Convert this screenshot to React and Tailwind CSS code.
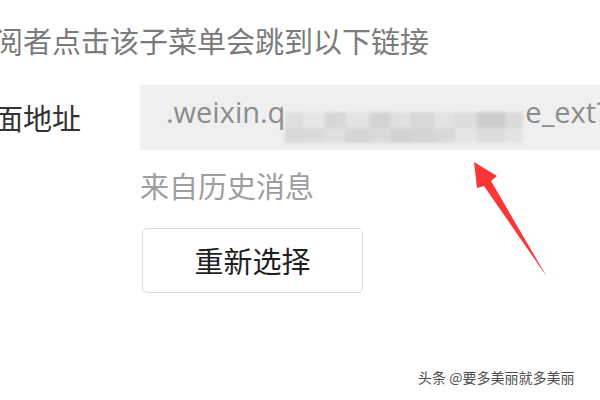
import React from "react";

const blocks = [
  { w: 18, top: "#dedede", bot: "#d8d8d8" },
  { w: 22, top: "#e6e6e6", bot: "#dadada" },
  { w: 20, top: "#d6d6d6", bot: "#e0e0e0" },
  { w: 24, top: "#e3e3e3", bot: "#d5d5d5" },
  { w: 22, top: "#d3d3d3", bot: "#dadada" },
  { w: 20, top: "#e0e0e0", bot: "#d2d2d2" },
  { w: 24, top: "#d8d8d8", bot: "#d4d4d4" },
  { w: 20, top: "#e2e2e2", bot: "#d8d8d8" },
  { w: 22, top: "#dcdcdc", bot: "#e4e4e4" },
  { w: 28, top: "#cdcdcd", bot: "#dddddd" },
  { w: 18, top: "#dadada", bot: "#e3e3e3" },
];

function Mosaic() {
  return (
    <span className="inline-flex h-[31px] w-[240px] translate-y-[5px] overflow-hidden align-baseline blur-[1.5px]">
      {blocks.map((b, i) => (
        <span key={i} className="flex flex-col" style={{ width: b.w }}>
          <span className="h-[16px]" style={{ background: b.top }} />
          <span className="h-[15px]" style={{ background: b.bot }} />
        </span>
      ))}
    </span>
  );
}

export default function App() {
  return (
    <div className="relative h-[400px] w-[600px] overflow-hidden bg-white font-['Noto_Sans_CJK_SC','Noto_Sans',sans-serif]">
      <div className="flex flex-col">
        <div className="-ml-[6px] mt-[26px] whitespace-nowrap text-[29px] leading-[29px] text-[#7b7b7b]">
          阅者点击该子菜单会跳到以下链接
        </div>

        <div className="mt-[30px] flex items-center">
          <div className="-ml-[6px] w-[146px] whitespace-nowrap text-[29px] leading-[29px] text-[#333333]">
            面地址
          </div>
          <div className="flex h-[65px] flex-1 items-center overflow-hidden bg-[#efefef] pl-[26px]">
            <span className="whitespace-nowrap font-['Open_Sans','Noto_Sans',sans-serif] text-[29px] leading-[30px] text-[#8c8c8c]">
              .weixin.q<Mosaic />e_ext?
            </span>
          </div>
        </div>

        <div className="ml-[140px] mt-[21px] text-[29px] leading-[29px] text-[#9e9e9e]">
          来自历史消息
        </div>

        <div className="ml-[142px] mt-[28px]">
          <div className="flex h-[65px] w-[221px] items-center justify-center rounded-[5px] border border-[#dcdcdc] bg-white text-[29px] text-[#1f1f1f]">
            重新选择
          </div>
        </div>
      </div>

      <svg className="absolute left-0 top-0" width="600" height="400" viewBox="0 0 600 400">
        <polygon points="474,162 497,176 491,181 547,277 484,186 477,188" fill="#fa3636" />
      </svg>

      <div className="absolute left-[418px] top-[369px] whitespace-nowrap text-[14px] leading-[16px] text-[#4d4d4d] [text-shadow:0_0_2px_#ffffff]">
        头条 @要多美丽就多美丽
      </div>
    </div>
  );
}
